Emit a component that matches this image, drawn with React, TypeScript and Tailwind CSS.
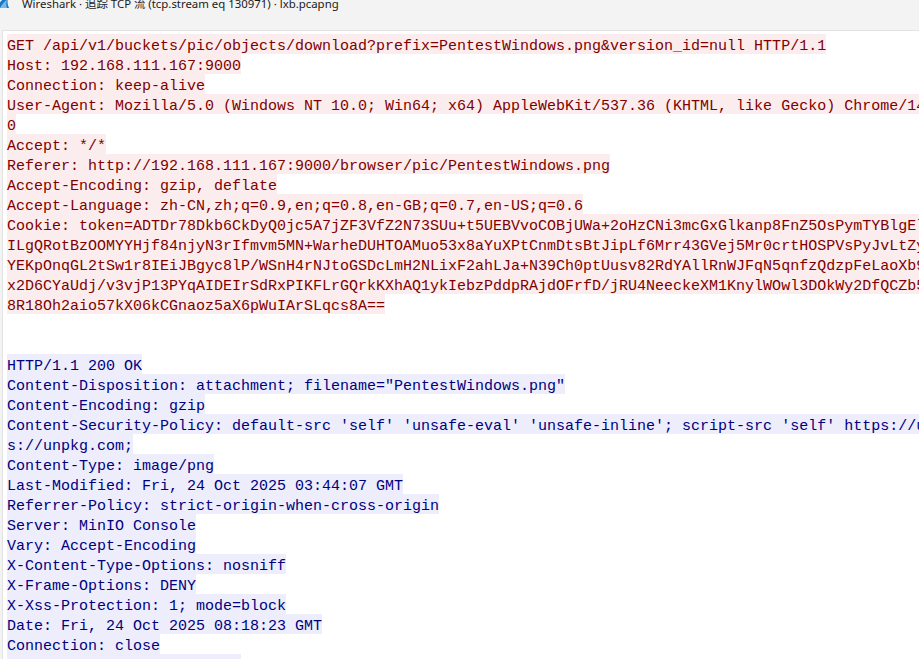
import React from "react";

type Line = { t: string; k: "c" | "s" | "e" };

const req: string[] = [
  "GET /api/v1/buckets/pic/objects/download?prefix=PentestWindows.png&version_id=null HTTP/1.1",
  "Host: 192.168.111.167:9000",
  "Connection: keep-alive",
  "User-Agent: Mozilla/5.0 (Windows NT 10.0; Win64; x64) AppleWebKit/537.36 (KHTML, like Gecko) Chrome/141.0.0.0 Safari/537.36 Edg/141.0.0.",
  "0",
  "Accept: */*",
  "Referer: http://192.168.111.167:9000/browser/pic/PentestWindows.png",
  "Accept-Encoding: gzip, deflate",
  "Accept-Language: zh-CN,zh;q=0.9,en;q=0.8,en-GB;q=0.7,en-US;q=0.6",
  "Cookie: token=ADTDr78Dkb6CkDyQ0jc5A7jZF3VfZ2N73SUu+t5UEBVvoCOBjUWa+2oHzCNi3mcGxGlkanp8FnZ5OsPymTYBlgEl3kQ9sPq2LmXa7RtYu0VbNc4WdFe8JhK",
  "ILgQRotBzOOMYYHjf84njyN3rIfmvm5MN+WarheDUHTOAMuo53x8aYuXPtCnmDtsBtJipLf6Mrr43GVej5Mr0crtHOSPVsPyJvLtZy7QwErTyUiOpAsDfGhJkLzXcVbNmQw",
  "YEKpOnqGL2tSw1r8IEiJBgyc8lP/WSnH4rNJtoGSDcLmH2NLixF2ahLJa+N39Ch0ptUusv82RdYAllRnWJFqN5qnfzQdzpFeLaoXb9aSdFgHjKlZxCvBnMqWeRtYuIoPaSd",
  "x2D6CYaUdj/v3vjP13PYqAIDEIrSdRxPIKFLrGQrkKXhAQ1ykIebzPddpRAjdOFrfD/jRU4NeeckeXM1KnylWOwl3DOkWy2DfQCZb5pLkJhGfDsAqWeRtYuIoPzXcVbNmQw",
  "8R18Oh2aio57kX06kCGnaoz5aX6pWuIArSLqcs8A==",
];

const resp: string[] = [
  "HTTP/1.1 200 OK",
  'Content-Disposition: attachment; filename="PentestWindows.png"',
  "Content-Encoding: gzip",
  "Content-Security-Policy: default-src 'self' 'unsafe-eval' 'unsafe-inline'; script-src 'self' https://unpkg.com; connect-src 'self' http",
  "s://unpkg.com;",
  "Content-Type: image/png",
  "Last-Modified: Fri, 24 Oct 2025 03:44:07 GMT",
  "Referrer-Policy: strict-origin-when-cross-origin",
  "Server: MinIO Console",
  "Vary: Accept-Encoding",
  "X-Content-Type-Options: nosniff",
  "X-Frame-Options: DENY",
  "X-Xss-Protection: 1; mode=block",
  "Date: Fri, 24 Oct 2025 08:18:23 GMT",
  "Connection: close",
  "Transfer-Encoding: chunked",
];

const lines: Line[] = [
  ...req.map((t) => ({ t, k: "c" as const })),
  { t: "", k: "e" },
  { t: "", k: "e" },
  ...resp.map((t) => ({ t, k: "s" as const })),
];

export default function App() {
  return (
    <div className="w-[919px] h-[659px] overflow-hidden bg-[#f3f3f3]">
      <div className="h-[30px] flex items-start overflow-hidden">
        <svg width="16" height="16" viewBox="0 0 16 16" className="-mt-[6px] -ml-[6px] shrink-0">
          <path d="M2 14 C5 9 9 4 15 1 C13 6 13 10 15 14 Z" fill="#1679c8" />
          <path d="M6 14 C8 10 11 7 13 6 C12 9 12 11 13 14 Z" fill="#7fb8e8" />
        </svg>
        <div
          className="ml-[12px] -mt-[4px] text-[11.4px] leading-[16px] text-[#1a1a1a] whitespace-pre"
          style={{ fontFamily: '"Noto Sans", "Noto Sans CJK SC", sans-serif' }}
        >
          Wireshark · 追踪 TCP 流 (tcp.stream eq 130971) · lxb.pcapng
        </div>
      </div>
      <div className="ml-[2px] w-[1400px] h-[700px] bg-white border-l border-t border-[#e3e3e3] pt-[3px] pl-[4px]">
        {lines.map((l, i) => (
          <div
            key={i}
            className="h-[20px] leading-[20px] whitespace-pre text-[15px]"
            style={{ fontFamily: '"Liberation Mono", monospace' }}
          >
            {l.k === "c" ? (
              <span className="inline-block align-top h-[20px] pt-[4px] leading-[18px] bg-[#fbeded] text-[#7f0000]">{l.t}</span>
            ) : l.k === "s" ? (
              <span className="inline-block align-top h-[20px] pt-[4px] leading-[18px] bg-[#ededfb] text-[#00007f]">{l.t}</span>
            ) : null}
          </div>
        ))}
      </div>
    </div>
  );
}
